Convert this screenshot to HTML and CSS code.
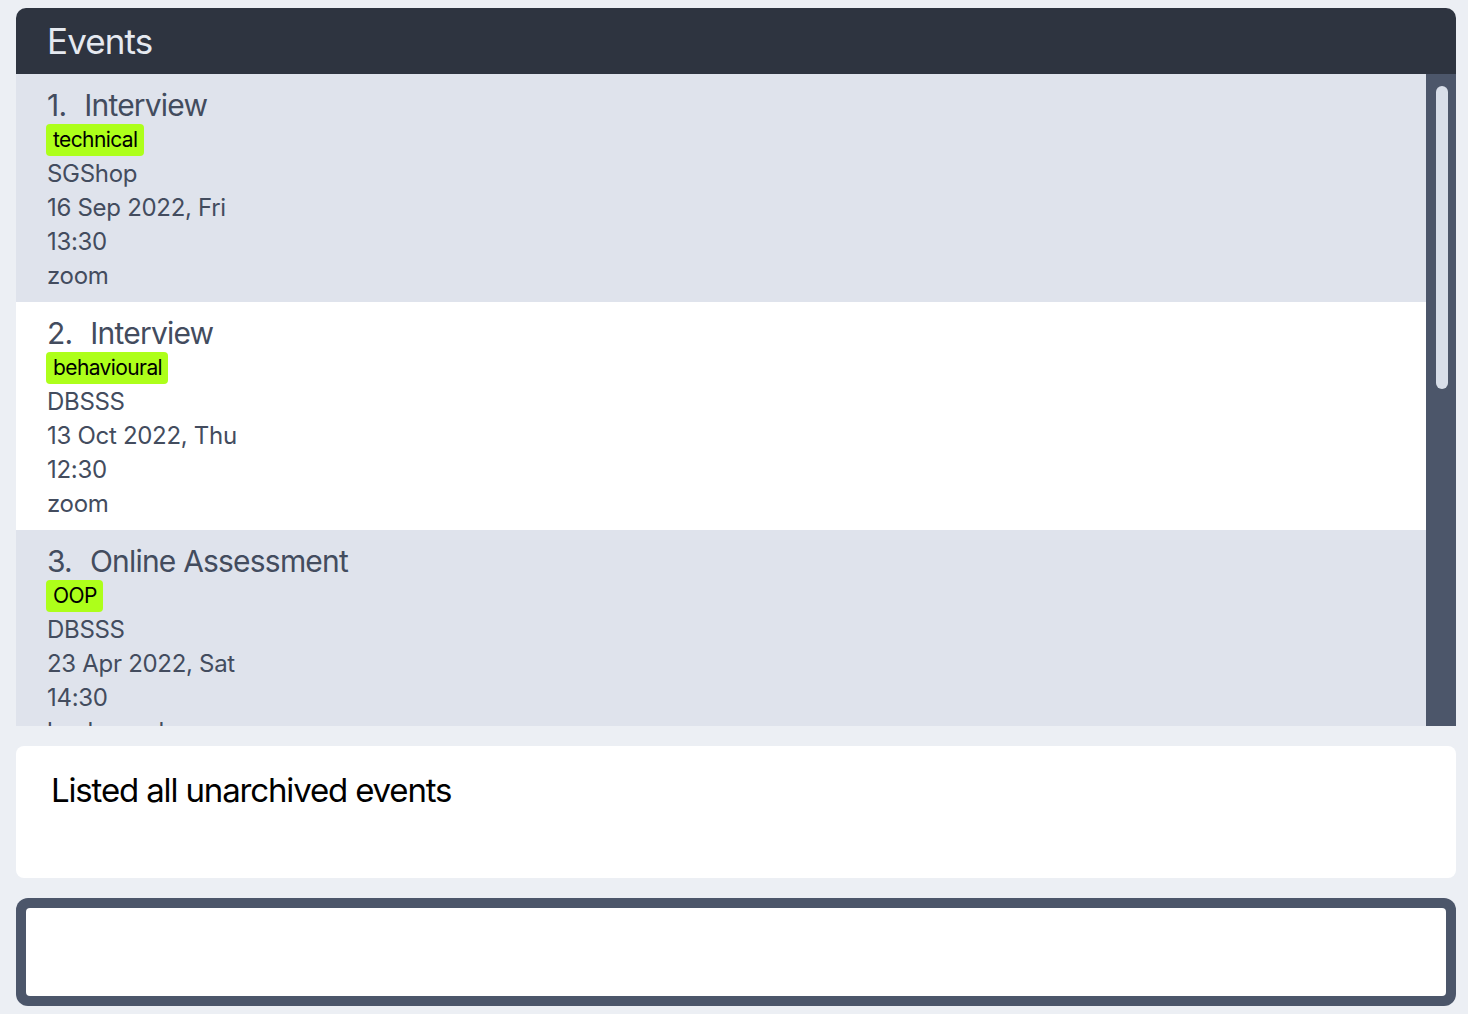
FILE: index.html
```html
<!DOCTYPE html>
<html>
<head>
<meta charset="utf-8">
<link rel="stylesheet" href="styles.css">
</head>
<body>
<div class="app">
  <section class="panel">
    <header class="panel-head">Events</header>
    <div class="list-wrap">
      <div class="list">
        <div class="item odd">
          <div class="title"><span class="num">1.</span><span>Interview</span></div>
          <div class="tags"><span class="tag">technical</span></div>
          <div class="line">SGShop</div>
          <div class="line">16 Sep 2022, Fri</div>
          <div class="line">13:30</div>
          <div class="line">zoom</div>
        </div>
        <div class="item even">
          <div class="title"><span class="num">2.</span><span>Interview</span></div>
          <div class="tags"><span class="tag">behavioural</span></div>
          <div class="line">DBSSS</div>
          <div class="line">13 Oct 2022, Thu</div>
          <div class="line">12:30</div>
          <div class="line">zoom</div>
        </div>
        <div class="item odd">
          <div class="title"><span class="num">3.</span><span>Online Assessment</span></div>
          <div class="tags"><span class="tag">OOP</span></div>
          <div class="line">DBSSS</div>
          <div class="line">23 Apr 2022, Sat</div>
          <div class="line">14:30</div>
          <div class="line">hackerrank</div>
        </div>
      </div>
      <div class="scrollbar"><div class="thumb"></div></div>
    </div>
  </section>
  <section class="result">Listed all unarchived events</section>
  <section class="command"><div class="command-inner"></div></section>
</div>
</body>
</html>
```
FILE: styles.css
```css
html, body {
  margin: 0;
  padding: 0;
  background: #eceff4;
  font-family: Inter, "Noto Sans", sans-serif;
}
.app {
  padding: 8px 12px 8px 16px;
  display: flex;
  flex-direction: column;
  height: 1014px;
  box-sizing: border-box;
}
.panel {
  width: 1440px;
  height: 718px;
  display: flex;
  flex-direction: column;
  border-radius: 10px 10px 0 0;
  overflow: hidden;
}
.panel-head {
  height: 66px;
  flex: none;
  background: #2e3440;
  color: #e5e9f0;
  font-size: 35px;
  line-height: 66px;
  padding-left: 31px;
  letter-spacing: -0.9px;
}
.list-wrap {
  flex: 1;
  display: flex;
  min-height: 0;
}
.list {
  flex: 1;
  overflow: hidden;
}
.item {
  height: 228px;
  box-sizing: border-box;
  padding: 12px 0 0 31px;
  color: #434c5e;
}
.item.odd { background: #dfe3ec; }
.item.even { background: #ffffff; }
.title {
  font-size: 30px;
  line-height: 38px;
  display: flex;
  gap: 18px;
  letter-spacing: -0.8px;
}
.tags {
  display: flex;
  margin: 0 0 1px -1px;
}
.tag {
  background: #adff1a;
  color: #000;
  font-size: 21px;
  line-height: 32px;
  padding: 0 6px 0 7px;
  border-radius: 4px;
  letter-spacing: -0.6px;
}
.line {
  font-size: 24px;
  line-height: 34px;
  letter-spacing: -0.3px;
}
.scrollbar {
  width: 30px;
  flex: none;
  background: #4c566a;
  padding-top: 12px;
  box-sizing: border-box;
}
.thumb {
  width: 12px;
  height: 303px;
  margin-left: 10px;
  background: #d8dee9;
  border-radius: 6px;
}
.result {
  margin-top: 20px;
  width: 1440px;
  height: 132px;
  box-sizing: border-box;
  background: #ffffff;
  border-radius: 8px;
  padding: 24px 35px;
  font-size: 33px;
  line-height: 40px;
  color: #000;
  letter-spacing: -1.15px;
}
.command {
  margin-top: 20px;
  width: 1440px;
  height: 108px;
  box-sizing: border-box;
  background: #4c566a;
  border-radius: 12px;
  padding: 10px;
}
.command-inner {
  height: 100%;
  background: #ffffff;
  border-radius: 4px;
}
```
